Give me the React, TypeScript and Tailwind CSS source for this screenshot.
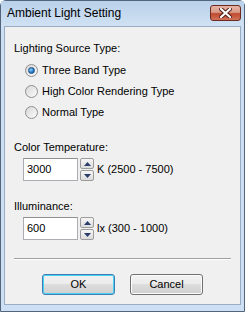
import React from "react";

const font = { fontFamily: '"Liberation Sans", Arial, sans-serif' };

function Radio({ checked, label }: { checked?: boolean; label: string }) {
  return (
    <div className="flex h-[21px] items-center">
      <span className="ml-[20px] flex h-[13px] w-[13px] items-center justify-center rounded-full border border-[#8f8f8f] bg-gradient-to-br from-[#d8d8d8] to-[#fbfbfb]">
        {checked && (
          <span className="h-[7px] w-[7px] rounded-full border border-[#1f4f86] bg-[radial-gradient(circle_at_35%_35%,#8fd0f7,#2a7fc8_55%,#184f8f)]" />
        )}
      </span>
      <span className="ml-[4px] text-[11px] leading-none text-black">{label}</span>
    </div>
  );
}

function Arrow({ up }: { up?: boolean }) {
  return (
    <svg width="7" height="4" viewBox="0 0 7 4">
      <path d={up ? "M0 4 L3.5 0 L7 4 Z" : "M0 0 L3.5 4 L7 0 Z"} fill="#2b3d6b" />
    </svg>
  );
}

function SpinField({ value, unit }: { value: string; unit: string }) {
  return (
    <div className="ml-[18px] flex h-[23px] items-center">
      <div className="flex h-[23px] w-[55px] items-center border border-[#abadb3] border-t-[#8e8f8f] bg-white pl-[3px] text-[11px] text-black">
        {value}
      </div>
      <div className="ml-[2px] flex h-[23px] w-[14px] flex-col gap-[1px]">
        <div className="flex h-[11px] items-center justify-center rounded-[2px] border border-[#9c9c9c] bg-gradient-to-b from-[#f6f6f6] to-[#dcdcdc]">
          <Arrow up />
        </div>
        <div className="flex h-[11px] items-center justify-center rounded-[2px] border border-[#9c9c9c] bg-gradient-to-b from-[#f6f6f6] to-[#dcdcdc]">
          <Arrow />
        </div>
      </div>
      <span className="ml-[3px] text-[11px] text-black">{unit}</span>
    </div>
  );
}

function Button({ label, primary }: { label: string; primary?: boolean }) {
  return (
    <div
      className={
        "flex h-[21px] w-[73px] items-center justify-center rounded-[3px] border text-[11px] text-black bg-[linear-gradient(#f2f2f2_0%,#ebebeb_50%,#dddddd_50%,#cfcfcf_100%)] " +
        (primary ? "border-[#3c7fb1] shadow-[inset_0_0_0_1px_#48d1f7]" : "border-[#707070] shadow-[inset_0_0_0_1px_#fcfcfc]")
      }
    >
      {label}
    </div>
  );
}

export default function App() {
  return (
    <div className="h-[312px] w-[245px] overflow-hidden" style={font}>
      <div className="flex h-full w-full flex-col rounded-t-[6px] border border-[#52647a] bg-[#cddff2]">
        <div className="flex h-[25px] items-start justify-between bg-gradient-to-b from-[#b9d1ea] to-[#d0e1f3] pl-[6px] pr-[3px]">
          <span className="mt-[5px] text-[12px] leading-[15px] text-black">Ambient Light Setting</span>
          <div className="mt-[4px] flex h-[16px] w-[31px] items-center justify-center rounded-[3px] border border-[#6b2a1e] bg-[linear-gradient(#e7b3a6_0%,#d99a88_45%,#c0492f_55%,#d1735a_100%)]">
            <svg width="13" height="10" viewBox="0 0 13 10">
              <path d="M2 1 L11 9 M11 1 L2 9" stroke="#4a1a12" strokeWidth="4" strokeLinecap="square" />
              <path d="M2 1 L11 9 M11 1 L2 9" stroke="#ffffff" strokeWidth="2.2" strokeLinecap="square" />
            </svg>
          </div>
        </div>
        <div className="mx-[3px] mb-[6px] flex flex-1 flex-col border border-[#99adc4] bg-[#f0f0f0]">
          <div className="ml-[9px] mt-[13px] h-[16px] text-[11px] leading-[16px] text-black">Lighting Source Type:</div>
          <div className="mt-[4px] flex flex-col">
            <Radio checked label="Three Band Type" />
            <Radio label="High Color Rendering Type" />
            <Radio label="Normal Type" />
          </div>
          <div className="ml-[9px] mt-[16px] h-[16px] text-[11px] leading-[16px] text-black">Color Temperature:</div>
          <div className="mt-[3px]">
            <SpinField value="3000" unit="K (2500 - 7500)" />
          </div>
          <div className="ml-[9px] mt-[17px] h-[16px] text-[11px] leading-[16px] text-black">Illuminance:</div>
          <div className="mt-[3px]">
            <SpinField value="600" unit="lx (300 - 1000)" />
          </div>
          <div className="ml-[9px] mr-[9px] mt-[18px] h-[2px] border-t border-[#a0a0a0] border-b-white border-b" />
          <div className="mt-[14px] flex justify-center gap-[15px]">
            <Button primary label="OK" />
            <Button label="Cancel" />
          </div>
        </div>
      </div>
    </div>
  );
}
